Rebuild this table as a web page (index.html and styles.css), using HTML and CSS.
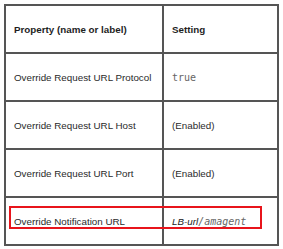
FILE: index.html
```html
<!DOCTYPE html>
<html>
<head>
<meta charset="utf-8">
<link rel="stylesheet" href="styles.css">
</head>
<body>
<div class="wrap">
  <table class="props">
    <tr class="head">
      <th class="c1">Property (name or label)</th>
      <th class="c2">Setting</th>
    </tr>
    <tr>
      <td>Override Request URL Protocol</td>
      <td><code class="mono">true</code></td>
    </tr>
    <tr>
      <td>Override Request URL Host</td>
      <td>(Enabled)</td>
    </tr>
    <tr>
      <td>Override Request URL Port</td>
      <td>(Enabled)</td>
    </tr>
    <tr>
      <td>Override Notification URL</td>
      <td><i class="var">LB-url</i><code class="mono it">/amagent</code></td>
    </tr>
  </table>
  <div class="highlight"></div>
</div>
</body>
</html>
```
FILE: styles.css
```css
html, body {
  margin: 0;
  padding: 0;
  background: #fff;
}
body {
  width: 283px;
  height: 249px;
  overflow: hidden;
}
.wrap {
  position: relative;
  padding: 4px 0 0 4px;
}
.props {
  border-collapse: collapse;
  table-layout: fixed;
  width: 275px;
  font-family: "Liberation Sans", Arial, sans-serif;
  font-size: 9.8px;
  color: #2a2a2a;
}
.props th, .props td {
  border: 2px solid #555;
  height: 45px;
  padding: 1px 4px 0 8px;
  text-align: left;
  vertical-align: middle;
  white-space: nowrap;
  box-sizing: content-box;
}
.props th {
  font-weight: bold;
  color: #1e1e1e;
}
.c1 {
  width: 144px;
}
.mono {
  font-family: "DejaVu Sans Mono", "Liberation Mono", monospace;
  font-size: 10px;
  color: #666;
}
.it {
  font-style: italic;
}
.var {
  font-style: italic;
  color: #222;
}
.highlight {
  position: absolute;
  left: 9px;
  top: 206px;
  width: 253px;
  height: 23px;
  border: 2px solid #e8141b;
  box-sizing: border-box;
}
```
